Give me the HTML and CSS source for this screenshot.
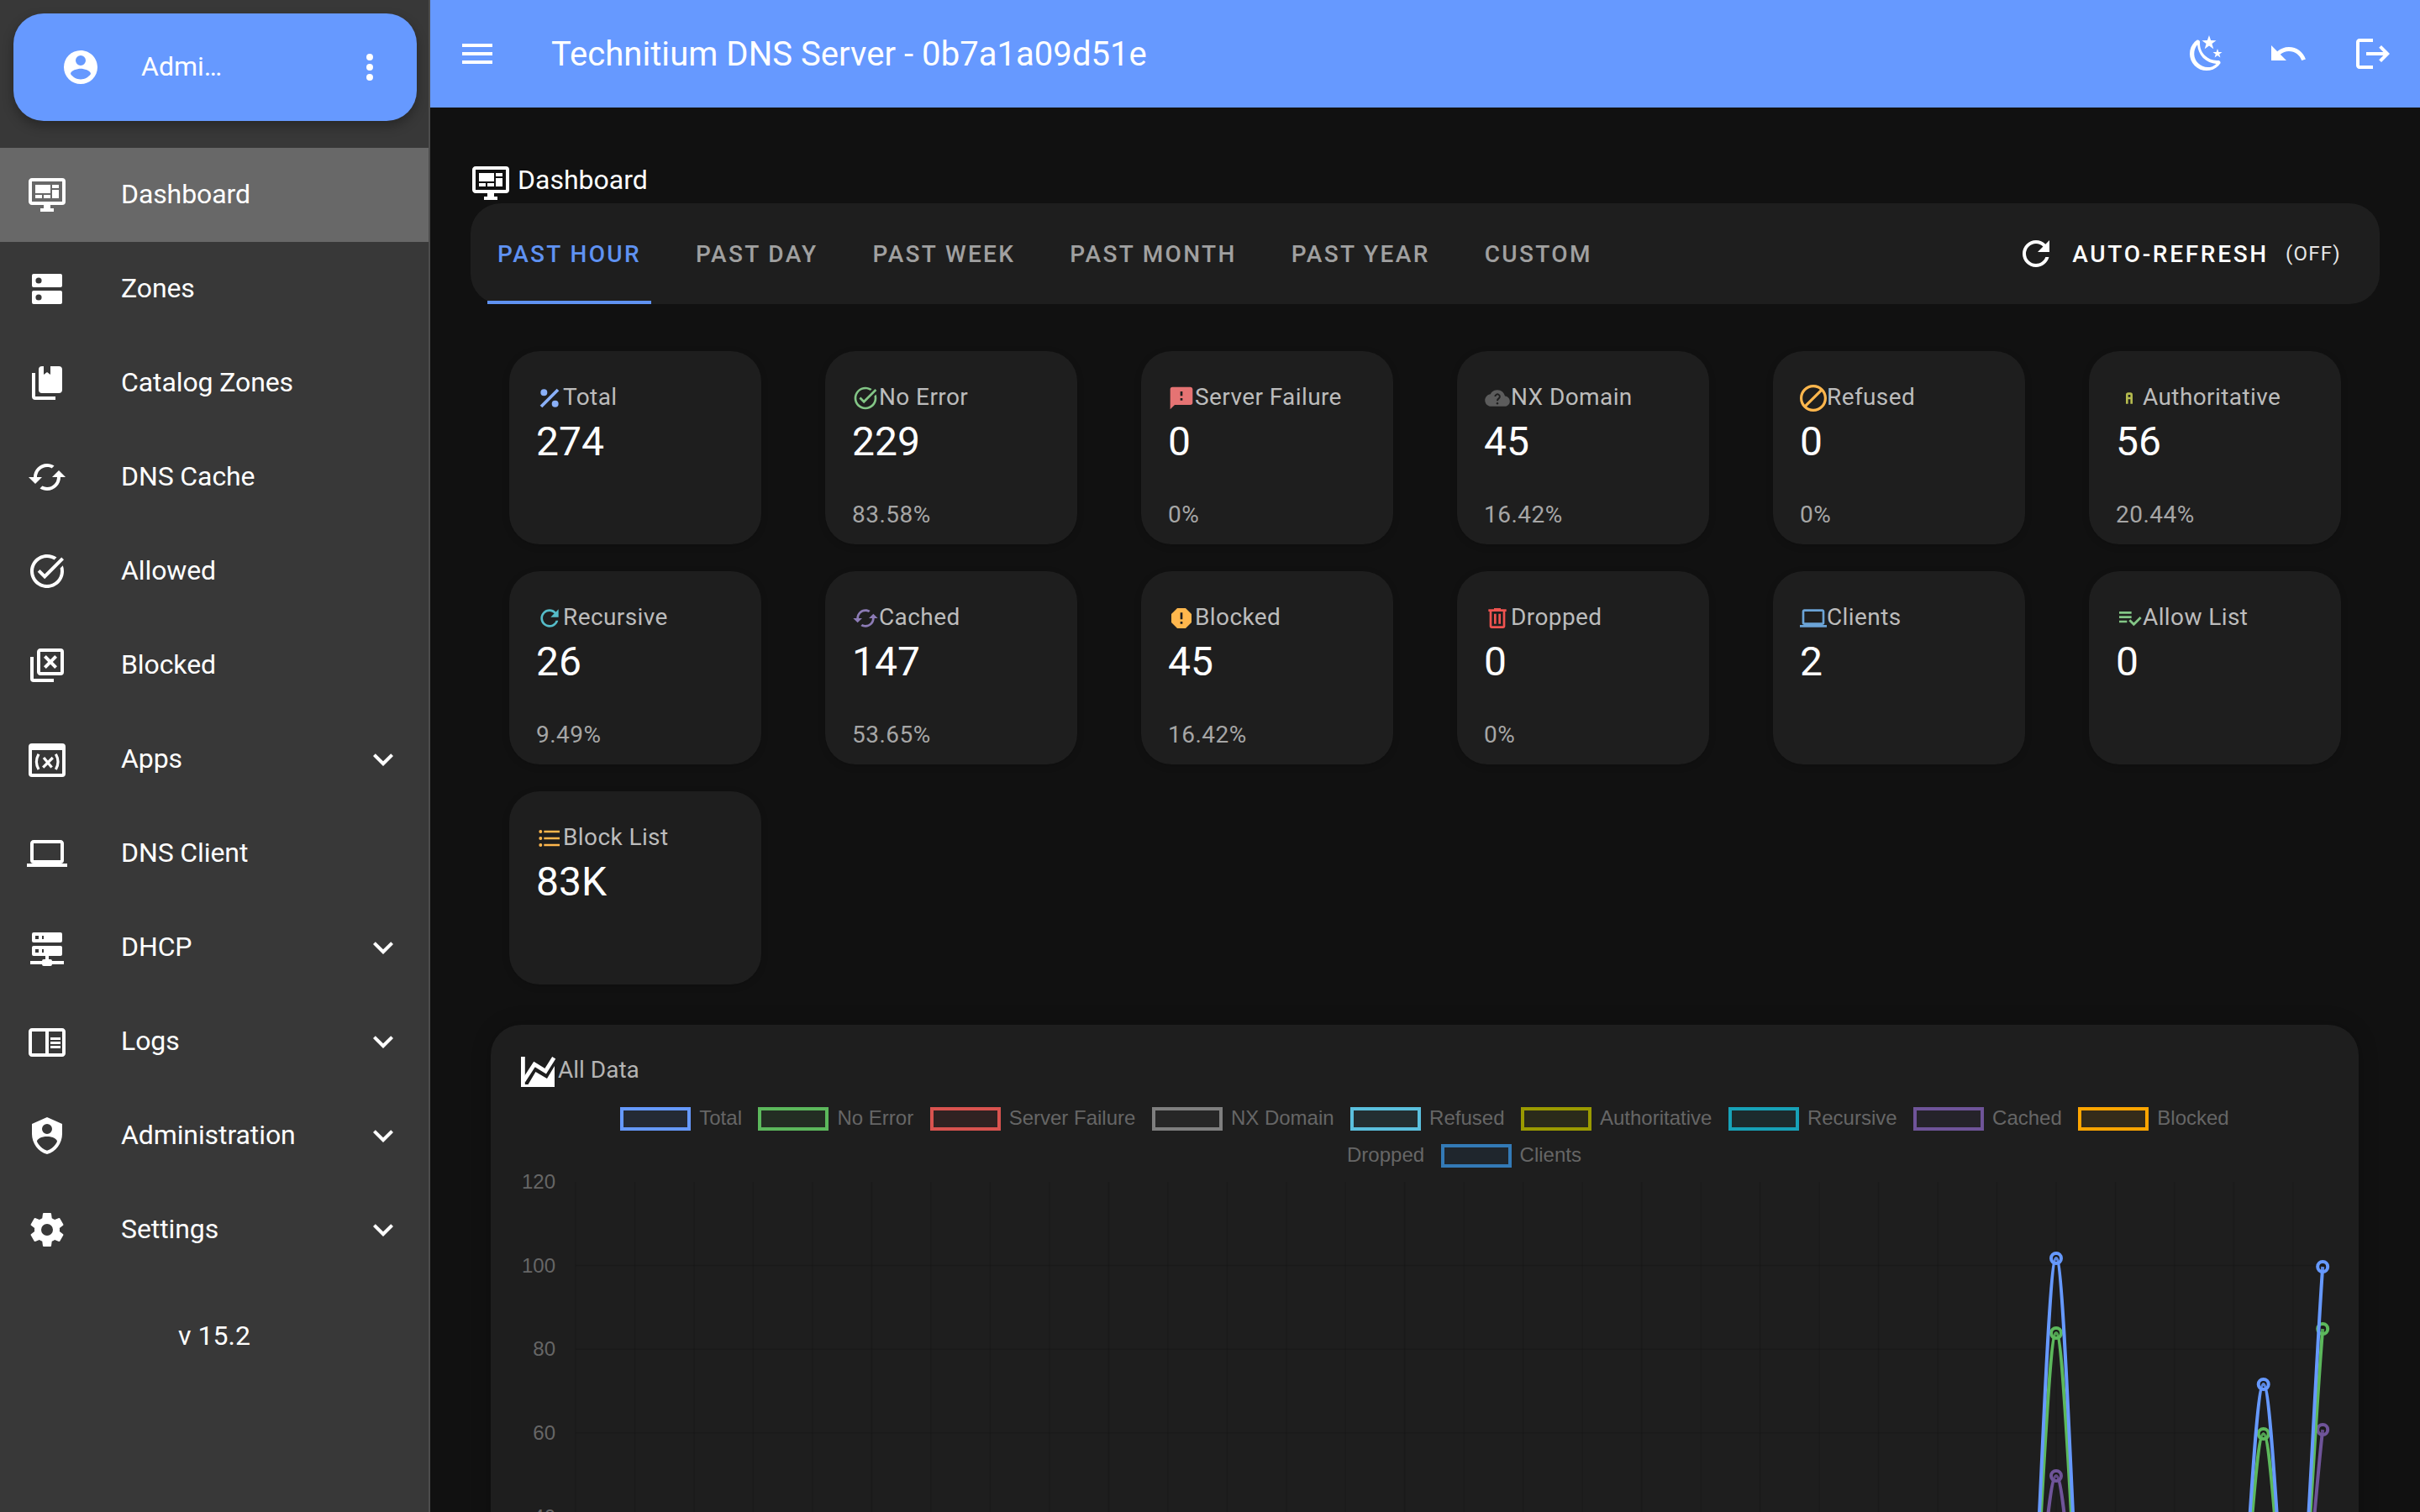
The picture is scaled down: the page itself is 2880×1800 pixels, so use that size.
FILE: index.html
```html
<!DOCTYPE html>
<html>
	<head>
		<meta charset="utf-8">
		<title>Technitium DNS Server</title>
		<link rel="stylesheet" href="styles.css">
	</head>
	<body>
		<!-- icon sheet -->
		<svg class="icon-sheet" xmlns="http://www.w3.org/2000/svg">
			<symbol id="i-account" viewBox="0 0 24 24"><path d="M12,19.2C9.5,19.2 7.29,17.92 6,16C6.03,14 10,12.9 12,12.9C14,12.9 17.97,14 18,16C16.71,17.92 14.5,19.2 12,19.2M12,5A3,3 0 0,1 15,8A3,3 0 0,1 12,11A3,3 0 0,1 9,8A3,3 0 0,1 12,5M12,2A10,10 0 0,0 2,12A10,10 0 0,0 12,22A10,10 0 0,0 22,12C22,6.47 17.5,2 12,2Z"/></symbol>
			<symbol id="i-dots" viewBox="0 0 24 24"><path d="M12,16A2,2 0 0,1 14,18A2,2 0 0,1 12,20A2,2 0 0,1 10,18A2,2 0 0,1 12,16M12,10A2,2 0 0,1 14,12A2,2 0 0,1 12,14A2,2 0 0,1 10,12A2,2 0 0,1 12,10M12,4A2,2 0 0,1 14,6A2,2 0 0,1 12,8A2,2 0 0,1 10,6A2,2 0 0,1 12,4Z"/></symbol>
			<symbol id="i-monitor" viewBox="0 0 24 24"><path d="M21,16V4H3V16H21M21,2A2,2 0 0,1 23,4V16A2,2 0 0,1 21,18H14V20H16V22H8V20H10V18H3C1.89,18 1,17.1 1,16V4C1,2.89 1.89,2 3,2H21M5,6H14V11H5V6M15,6H19V8H15V6M19,9V14H15V9H19M5,12H9V14H5V12M10,12H14V14H10V12Z"/></symbol>
			<symbol id="i-dns" viewBox="0 0 24 24"><path fill-rule="evenodd" d="M4,3H20A1,1 0 0,1 21,4V10A1,1 0 0,1 20,11H4A1,1 0 0,1 3,10V4A1,1 0 0,1 4,3M7,5.2A1.8,1.8 0 1,0 7,8.8A1.8,1.8 0 1,0 7,5.2M4,13H20A1,1 0 0,1 21,14V20A1,1 0 0,1 20,21H4A1,1 0 0,1 3,20V14A1,1 0 0,1 4,13M7,15.2A1.8,1.8 0 1,0 7,18.8A1.8,1.8 0 1,0 7,15.2Z"/></symbol>
			<symbol id="i-book" viewBox="0 0 24 24"><path d="M19 18H9A2 2 0 0 1 7 16V4A2 2 0 0 1 9 2H10V7L12 5.5L14 7V2H19A2 2 0 0 1 21 4V16A2 2 0 0 1 19 18M17 20H5V6H3V20A2 2 0 0 0 5 22H17V20Z"/></symbol>
			<symbol id="i-cached" viewBox="0 0 24 24"><path d="M19,8L15,12H18A6,6 0 0,1 12,18C11,18 10.03,17.75 9.2,17.3L7.74,18.76C8.97,19.54 10.43,20 12,20A8,8 0 0,0 20,12H23M6,12A6,6 0 0,1 12,6C13,6 13.97,6.25 14.8,6.7L16.26,5.24C15.03,4.46 13.57,4 12,4A8,8 0 0,0 4,12H1L5,16L9,12"/></symbol>
			<symbol id="i-task" viewBox="0 0 24 24"><path d="M22 5.18L10.59 16.6l-4.24-4.24 1.41-1.41 2.83 2.83 10-10L22 5.18zm-2.21 5.04c.13.57.21 1.17.21 1.78 0 4.42-3.58 8-8 8s-8-3.58-8-8 3.58-8 8-8c1.58 0 3.04.46 4.28 1.25l1.44-1.44C16.1 2.67 14.13 2 12 2 6.48 2 2 6.48 2 12s4.48 10 10 10 10-4.48 10-10c0-1.19-.22-2.33-.6-3.39l-1.61 1.61z"/></symbol>
			<symbol id="i-close-box" viewBox="0 0 24 24"><path fill-rule="evenodd" d="M20,16V4H8V16H20M22,16A2,2 0 0,1 20,18H8C6.89,18 6,17.1 6,16V4C6,2.89 6.89,2 8,2H20A2,2 0 0,1 22,4V16M14,8.59L16.59,6L18,7.41L15.41,10L18,12.59L16.59,14L14,11.41L11.41,14L10,12.59L12.59,10L10,7.41L11.41,6Z"/><path d="M16,20V22H4A2,2 0 0,1 2,20V7H4V20H16Z"/></symbol>
			<symbol id="i-apps" viewBox="0 0 24 24"><path fill-rule="evenodd" d="M3,2.5H21A2,2 0 0,1 23,4.5V20.5A2,2 0 0,1 21,22.5H3A2,2 0 0,1 1,20.5V4.5A2,2 0 0,1 3,2.5M3,6.5V20.5H21V6.5Z"/><path fill="none" stroke="currentColor" stroke-width="1.6" d="M7,8.9Q4.4,13.5 7,18M17.2,8.9Q19.8,13.5 17.2,18M10,11L14.8,16.8M15.4,11L9.6,16.8"/></symbol>
			<symbol id="i-laptop" viewBox="0 0 24 24"><path d="M4,6H20V16H4M20,18A2,2 0 0,0 22,16V6C22,4.89 21.1,4 20,4H4C2.89,4 2,4.89 2,6V16A2,2 0 0,0 4,18H0V20H24V18H20Z"/></symbol>
			<symbol id="i-server" viewBox="0 0 24 24"><path d="M13,19H14A1,1 0 0,1 15,20H22V22H15A1,1 0 0,1 14,23H10A1,1 0 0,1 9,22H2V20H9A1,1 0 0,1 10,19H11V17H4A1,1 0 0,1 3,16V12A1,1 0 0,1 4,11H20A1,1 0 0,1 21,12V16A1,1 0 0,1 20,17H13V19M4,3H20A1,1 0 0,1 21,4V8A1,1 0 0,1 20,9H4A1,1 0 0,1 3,8V4A1,1 0 0,1 4,3M9,7H10V5H9V7M9,15H10V13H9V15M5,5V7H7V5H5M5,13V15H7V13H5Z"/></symbol>
			<symbol id="i-reader" viewBox="0 0 24 24"><path d="M21 4H3c-1.1 0-2 .9-2 2v13c0 1.1.9 2 2 2h18c1.1 0 2-.9 2-2V6c0-1.1-.9-2-2-2zM3 19V6h8v13H3zm18 0h-8V6h8v13zm-7-9.5h6V11h-6zm0 2.5h6v1.5h-6zm0 2.5h6V16h-6z"/></symbol>
			<symbol id="i-shield" viewBox="0 0 24 24"><path d="M12,1L3,5V11C3,16.55 6.84,21.74 12,23C17.16,21.74 21,16.55 21,11V5L12,1M12,5A3,3 0 0,1 15,8A3,3 0 0,1 12,11A3,3 0 0,1 9,8A3,3 0 0,1 12,5M17.13,17C15.92,18.85 14.11,20.24 12,20.92C9.89,20.24 8.08,18.85 6.87,17C6.53,16.5 6.24,16 6,15.47C6,13.82 8.71,12.47 12,12.47C15.29,12.47 18,13.79 18,15.47C17.76,16 17.47,16.5 17.13,17Z"/></symbol>
			<symbol id="i-cog" viewBox="0 0 24 24"><path d="M12,15.5A3.5,3.5 0 0,1 8.5,12A3.5,3.5 0 0,1 12,8.5A3.5,3.5 0 0,1 15.5,12A3.5,3.5 0 0,1 12,15.5M19.43,12.97C19.47,12.65 19.5,12.33 19.5,12C19.5,11.67 19.47,11.34 19.43,11L21.54,9.37C21.73,9.22 21.78,8.95 21.66,8.73L19.66,5.27C19.54,5.05 19.27,4.96 19.05,5.05L16.56,6.05C16.04,5.66 15.5,5.32 14.87,5.07L14.5,2.42C14.46,2.18 14.25,2 14,2H10C9.75,2 9.54,2.18 9.5,2.42L9.13,5.07C8.5,5.32 7.96,5.66 7.44,6.05L4.95,5.05C4.73,4.96 4.46,5.05 4.34,5.27L2.34,8.73C2.21,8.95 2.27,9.22 2.46,9.37L4.57,11C4.53,11.34 4.5,11.67 4.5,12C4.5,12.33 4.53,12.65 4.57,12.97L2.46,14.63C2.27,14.78 2.21,15.05 2.34,15.27L4.34,18.73C4.46,18.95 4.73,19.03 4.95,18.95L7.44,17.94C7.96,18.34 8.5,18.68 9.13,18.93L9.5,21.58C9.54,21.82 9.75,22 10,22H14C14.25,22 14.46,21.82 14.5,21.58L14.87,18.93C15.5,18.67 16.04,18.34 16.56,17.94L19.05,18.95C19.27,19.03 19.54,18.95 19.66,18.73L21.66,15.27C21.78,15.05 21.73,14.78 21.54,14.63L19.43,12.97Z"/></symbol>
			<symbol id="i-chevron" viewBox="0 0 24 24"><path d="M16.59 8.59L12 13.17 7.41 8.59 6 10l6 6 6-6z"/></symbol>
			<symbol id="i-menu" viewBox="0 0 24 24"><path d="M3,6H21V8H3V6M3,11H21V13H3V11M3,16H21V18H3V16Z"/></symbol>
			<symbol id="i-moon" viewBox="0 0 24 24"><path d="M17.75,4.09L15.22,6.03L16.13,9.09L13.5,7.28L10.87,9.09L11.78,6.03L9.25,4.09L12.44,4L13.5,1L14.56,4L17.75,4.09M21.25,11L19.61,12.25L20.2,14.23L18.5,13.06L16.8,14.23L17.39,12.25L15.75,11L17.81,10.95L18.5,9L19.19,10.95L21.25,11M18.97,15.95C19.8,15.87 20.69,17.05 20.16,17.8C19.84,18.25 19.5,18.67 19.08,19.07C15.17,23 8.84,23 4.94,19.07C1.03,15.17 1.03,8.83 4.94,4.93C5.34,4.53 5.76,4.17 6.21,3.85C6.96,3.32 8.14,4.21 8.06,5.04C7.79,7.9 8.75,10.87 10.95,13.06C13.14,15.26 16.1,16.22 18.97,15.95M17.82,17.94C14.98,17.79 12.16,16.61 9.93,14.5C7.9,12.27 6.72,9.45 6.56,6.61C3.84,9.83 3.99,14.65 7.02,17.68C10.05,20.71 14.87,20.87 17.82,17.94Z"/></symbol>
			<symbol id="i-undo" viewBox="0 0 24 24"><path d="M12.5,8C9.85,8 7.45,9 5.6,10.6L2,7V16H11L7.38,12.38C8.77,11.22 10.54,10.5 12.5,10.5C16.04,10.5 19.05,12.81 20.1,16L22.47,15.22C21.08,11.03 17.15,8 12.5,8Z"/></symbol>
			<symbol id="i-logout" viewBox="0 0 24 24"><path d="M17 7l-1.41 1.41L18.17 11H8v2h10.17l-2.58 2.58L17 17l5-5zM4 5h8V3H4c-1.1 0-2 .9-2 2v14c0 1.1.9 2 2 2h8v-2H4V5z"/></symbol>
			<symbol id="i-refresh" viewBox="0 0 24 24"><path d="M17.65,6.35C16.2,4.9 14.21,4 12,4A8,8 0 0,0 4,12A8,8 0 0,0 12,20C15.73,20 18.84,17.45 19.73,14H17.65C16.83,16.33 14.61,18 12,18A6,6 0 0,1 6,12A6,6 0 0,1 12,6C13.66,6 15.14,6.69 16.22,7.78L13,11H20V4L17.65,6.35Z"/></symbol>
			<symbol id="i-percent" viewBox="0 0 24 24"><path d="M18.5,3.5L20.5,5.5L5.5,20.5L3.5,18.5L18.5,3.5M7,4A3,3 0 0,1 10,7A3,3 0 0,1 7,10A3,3 0 0,1 4,7A3,3 0 0,1 7,4M17,14A3,3 0 0,1 20,17A3,3 0 0,1 17,20A3,3 0 0,1 14,17A3,3 0 0,1 17,14Z"/></symbol>
			<symbol id="i-message" viewBox="0 0 24 24"><path d="M13,10H11V6H13M13,14H11V12H13M20,2H4A2,2 0 0,0 2,4V22L6,18H20A2,2 0 0,0 22,16V4C22,2.89 21.1,2 20,2Z"/></symbol>
			<symbol id="i-cloud" viewBox="-1 -1 26 26"><path d="M19.35 10.04C18.67 6.59 15.64 4 12 4 9.11 4 6.6 5.64 5.35 8.04 2.34 8.36 0 10.91 0 14c0 3.31 2.69 6 6 6h13c2.76 0 5-2.24 5-5 0-2.64-2.05-4.78-4.65-4.96z"/><path fill="none" stroke="#1e1e1e" stroke-width="1.6" d="M9.9,10.4A2.2,2.2 0 1,1 13.3,12.3C12.4,12.9 12,13.3 12,14.6"/><circle cx="12" cy="17" r="1" fill="#1e1e1e"/></symbol>
			<symbol id="i-cancel" viewBox="2 2 20 20"><path d="M12 2C6.48 2 2 6.48 2 12s4.48 10 10 10 10-4.48 10-10S17.52 2 12 2zM4 12c0-4.42 3.58-8 8-8 1.85 0 3.55.63 4.9 1.69L5.69 16.9C4.63 15.55 4 13.85 4 12zm8 8c-1.85 0-3.55-.63-4.9-1.69L18.31 7.1C19.37 8.45 20 10.15 20 12c0 4.42-3.58 8-8 8z"/></symbol>
			<symbol id="i-alpha" viewBox="0 0 24 24"><path d="M11,7A2,2 0 0,0 9,9V17H11V13H13V17H15V9A2,2 0 0,0 13,7H11M11,9H13V11H11V9Z"/></symbol>
			<symbol id="i-octagon" viewBox="0 0 24 24"><path d="M13 13H11V7H13M11 15H13V17H11M15.73 3H8.27L3 8.27V15.73L8.27 21H15.73L21 15.73V8.27L15.73 3Z"/></symbol>
			<symbol id="i-trash" viewBox="0 0 24 24"><path d="M9,3V4H4V6H5V19A2,2 0 0,0 7,21H17A2,2 0 0,0 19,19V6H20V4H15V3H9M7,6H17V19H7V6M9,8V17H11V8H9M13,8V17H15V8H13Z"/></symbol>
			<symbol id="i-allow" viewBox="0 0 24 24"><path d="M14 10H3V12H14V10M14 6H3V8H14V6M3 16H10V14H3V16M21.5 10.5L23 12L16 19L11.5 14.5L13 13L16 16L21.5 10.5Z"/></symbol>
			<symbol id="i-bullets" viewBox="0 0 24 24"><path d="M7,5H21V7H7V5M7,13V11H21V13H7M4,4.5A1.5,1.5 0 0,1 5.5,6A1.5,1.5 0 0,1 4,7.5A1.5,1.5 0 0,1 2.5,6A1.5,1.5 0 0,1 4,4.5M4,10.5A1.5,1.5 0 0,1 5.5,12A1.5,1.5 0 0,1 4,13.5A1.5,1.5 0 0,1 2.5,12A1.5,1.5 0 0,1 4,10.5M7,19V17H21V19H7M4,16.5A1.5,1.5 0 0,1 5.5,18A1.5,1.5 0 0,1 4,19.5A1.5,1.5 0 0,1 2.5,18A1.5,1.5 0 0,1 4,16.5Z"/></symbol>
			<symbol id="i-area" viewBox="0 0 24 24"><path d="M2,3H4.4V21H2ZM2,21V19.5H22V21ZM5.4,21L10.7,12L17.5,16L22,8.5V21Z"/><path fill="none" stroke="currentColor" stroke-width="2.4" d="M3.6,17.4L10,7.5L16.6,11.6L21.6,3.6"/></symbol>
		</svg>

		<div class="app">
			<aside class="sidebar">
				<div class="user-card">
					<svg class="ico"><use href="#i-account"/></svg>
					<span class="user-name">Admi…</span>
					<svg class="ico user-menu"><use href="#i-dots"/></svg>
				</div>
				<nav class="nav">
					<a class="nav-item active"><svg class="ico"><use href="#i-monitor"/></svg><span>Dashboard</span></a>
					<a class="nav-item"><svg class="ico"><use href="#i-dns"/></svg><span>Zones</span></a>
					<a class="nav-item"><svg class="ico"><use href="#i-book"/></svg><span>Catalog Zones</span></a>
					<a class="nav-item"><svg class="ico"><use href="#i-cached"/></svg><span>DNS Cache</span></a>
					<a class="nav-item"><svg class="ico"><use href="#i-task"/></svg><span>Allowed</span></a>
					<a class="nav-item"><svg class="ico"><use href="#i-close-box"/></svg><span>Blocked</span></a>
					<a class="nav-item"><svg class="ico"><use href="#i-apps"/></svg><span>Apps</span><svg class="ico chevron"><use href="#i-chevron"/></svg></a>
					<a class="nav-item"><svg class="ico"><use href="#i-laptop"/></svg><span>DNS Client</span></a>
					<a class="nav-item"><svg class="ico"><use href="#i-server"/></svg><span>DHCP</span><svg class="ico chevron"><use href="#i-chevron"/></svg></a>
					<a class="nav-item"><svg class="ico"><use href="#i-reader"/></svg><span>Logs</span><svg class="ico chevron"><use href="#i-chevron"/></svg></a>
					<a class="nav-item"><svg class="ico"><use href="#i-shield"/></svg><span>Administration</span><svg class="ico chevron"><use href="#i-chevron"/></svg></a>
					<a class="nav-item"><svg class="ico"><use href="#i-cog"/></svg><span>Settings</span><svg class="ico chevron"><use href="#i-chevron"/></svg></a>
				</nav>
				<div class="version">v 15.2</div>
			</aside>

			<div class="main">
				<header class="topbar">
					<svg class="ico"><use href="#i-menu"/></svg>
					<div class="topbar-title">Technitium DNS Server - 0b7a1a09d51e</div>
					<svg class="ico theme-btn"><use href="#i-moon"/></svg>
					<svg class="ico undo-btn"><use href="#i-undo"/></svg>
					<svg class="ico logout-btn"><use href="#i-logout"/></svg>
				</header>

				<main class="content">
					<div class="page-title">
						<svg class="ico"><use href="#i-monitor"/></svg>
						<span>Dashboard</span>
					</div>

					<div class="tabs">
						<a class="tab active">Past Hour</a>
						<a class="tab">Past Day</a>
						<a class="tab">Past Week</a>
						<a class="tab">Past Month</a>
						<a class="tab">Past Year</a>
						<a class="tab">Custom</a>
						<div class="auto-refresh">
							<svg class="ico"><use href="#i-refresh"/></svg>
							<span class="auto-label">Auto-Refresh</span>
							<span class="auto-state">(OFF)</span>
						</div>
					</div>

					<div class="stats">
						<div class="stat">
							<div class="stat-title"><svg class="ico-sm c-blue"><use href="#i-percent"/></svg>Total</div>
							<div class="stat-value">274</div>
						</div>
						<div class="stat">
							<div class="stat-title"><svg class="ico-sm c-green"><use href="#i-task"/></svg>No Error</div>
							<div class="stat-value">229</div>
							<div class="stat-pct">83.58%</div>
						</div>
						<div class="stat">
							<div class="stat-title"><svg class="ico-sm c-red"><use href="#i-message"/></svg>Server Failure</div>
							<div class="stat-value">0</div>
							<div class="stat-pct">0%</div>
						</div>
						<div class="stat">
							<div class="stat-title"><svg class="ico-sm c-gray"><use href="#i-cloud"/></svg>NX Domain</div>
							<div class="stat-value">45</div>
							<div class="stat-pct">16.42%</div>
						</div>
						<div class="stat">
							<div class="stat-title"><svg class="ico-sm c-amber"><use href="#i-cancel"/></svg>Refused</div>
							<div class="stat-value">0</div>
							<div class="stat-pct">0%</div>
						</div>
						<div class="stat">
							<div class="stat-title"><svg class="ico-sm c-olive"><use href="#i-alpha"/></svg>Authoritative</div>
							<div class="stat-value">56</div>
							<div class="stat-pct">20.44%</div>
						</div>
						<div class="stat">
							<div class="stat-title"><svg class="ico-sm c-teal"><use href="#i-refresh"/></svg>Recursive</div>
							<div class="stat-value">26</div>
							<div class="stat-pct">9.49%</div>
						</div>
						<div class="stat">
							<div class="stat-title"><svg class="ico-sm c-purple"><use href="#i-cached"/></svg>Cached</div>
							<div class="stat-value">147</div>
							<div class="stat-pct">53.65%</div>
						</div>
						<div class="stat">
							<div class="stat-title"><svg class="ico-sm c-amber"><use href="#i-octagon"/></svg>Blocked</div>
							<div class="stat-value">45</div>
							<div class="stat-pct">16.42%</div>
						</div>
						<div class="stat">
							<div class="stat-title"><svg class="ico-sm c-crimson"><use href="#i-trash"/></svg>Dropped</div>
							<div class="stat-value">0</div>
							<div class="stat-pct">0%</div>
						</div>
						<div class="stat">
							<div class="stat-title"><svg class="ico-sm c-sky"><use href="#i-laptop"/></svg>Clients</div>
							<div class="stat-value">2</div>
						</div>
						<div class="stat">
							<div class="stat-title"><svg class="ico-sm c-green"><use href="#i-allow"/></svg>Allow List</div>
							<div class="stat-value">0</div>
						</div>
						<div class="stat">
							<div class="stat-title"><svg class="ico-sm c-amber"><use href="#i-bullets"/></svg>Block List</div>
							<div class="stat-value">83K</div>
						</div>
					</div>

					<section class="chart-card">
						<div class="chart-title">
							<svg class="ico"><use href="#i-area"/></svg>
							<span>All Data</span>
						</div>
						<div class="legend">
							<div class="legend-item"><i class="swatch s-total"></i>Total</div>
							<div class="legend-item"><i class="swatch s-noerror"></i>No Error</div>
							<div class="legend-item"><i class="swatch s-failure"></i>Server Failure</div>
							<div class="legend-item"><i class="swatch s-nx"></i>NX Domain</div>
							<div class="legend-item"><i class="swatch s-refused"></i>Refused</div>
							<div class="legend-item"><i class="swatch s-auth"></i>Authoritative</div>
							<div class="legend-item"><i class="swatch s-recursive"></i>Recursive</div>
							<div class="legend-item"><i class="swatch s-cached"></i>Cached</div>
							<div class="legend-item"><i class="swatch s-blocked"></i>Blocked</div>
							<div class="legend-item"><i class="swatch s-dropped"></i>Dropped</div>
							<div class="legend-item"><i class="swatch s-clients"></i>Clients</div>
						</div>
						<!-- viewBox uses screen coordinates so the grid lines up with the reference -->
						<svg class="plot" viewBox="584 1396 2223 660">
							<g class="grid">
								<path d="M685 1407V2005M755.5 1407V2005M826 1407V2005M896.4 1407V2005M966.9 1407V2005M1037.4 1407V2005M1107.9 1407V2005M1178.4 1407V2005M1248.8 1407V2005M1319.3 1407V2005M1389.8 1407V2005M1460.3 1407V2005M1530.8 1407V2005M1601.2 1407V2005M1671.7 1407V2005M1742.2 1407V2005M1812.7 1407V2005M1883.2 1407V2005M1953.6 1407V2005M2024.1 1407V2005M2094.6 1407V2005M2165.1 1407V2005M2235.6 1407V2005M2306 1407V2005M2376.5 1407V2005M2447 1407V2005M2517.5 1407V2005M2588 1407V2005M2658.4 1407V2005M2728.9 1407V2005"/>
								<path d="M685 1506.6H2764M685 1606.2H2764M685 1705.8H2764M685 1805.4H2764"/>
							</g>
							<g class="axis">
								<text x="661" y="1415">120</text>
								<text x="661" y="1515">100</text>
								<text x="661" y="1614">80</text>
								<text x="661" y="1714">60</text>
								<text x="661" y="1814">40</text>
							</g>
							<g class="series l-cached">
								<path d="M2411.7 2005C2423.5 2005 2435.2 1757 2447 1757C2458.8 1757 2470.5 2005 2482.2 2005M2729 2005C2740.7 2005 2752.5 1803 2764.2 1702"/>
								<circle cx="2447" cy="1757" r="6"/>
								<circle cx="2764.2" cy="1702" r="6"/>
							</g>
							<g class="series l-noerror">
								<path d="M2411.7 2005C2423.5 2005 2435.2 1587 2447 1587C2458.8 1587 2470.5 2005 2482.2 2005M2658.4 2005C2670.2 2005 2681.9 1707 2693.7 1707C2705.4 1707 2717.2 2005 2729 2005C2740.7 2005 2752.5 1723 2764.2 1582"/>
								<circle cx="2447" cy="1587" r="6"/>
								<circle cx="2693.7" cy="1707" r="6"/>
								<circle cx="2764.2" cy="1582" r="6"/>
							</g>
							<g class="series l-total">
								<path d="M2411.7 2005C2423.5 2005 2435.2 1498 2447 1498C2458.8 1498 2470.5 2005 2482.2 2005M2658.4 2005C2670.2 2005 2681.9 1648 2693.7 1648C2705.4 1648 2717.2 2005 2729 2005C2740.7 2005 2752.5 1674 2764.2 1508"/>
								<circle cx="2447" cy="1498" r="6"/>
								<circle cx="2693.7" cy="1648" r="6"/>
								<circle cx="2764.2" cy="1508" r="6"/>
							</g>
						</svg>
					</section>
				</main>
			</div>
		</div>
	</body>
</html>
```

FILE: styles.css
```css
html {
  box-sizing: border-box;
  font-family: 'Roboto', 'Liberation Sans', sans-serif;
}

*, *:before, *:after {
  box-sizing: inherit;
}

body {
  margin: 0;
  height: 1800px;
  overflow: hidden;
  background: #111111;
  color: #ffffff;
}

.icon-sheet {
  position: absolute;
  width: 0;
  height: 0;
}

.ico {
  width: 48px;
  height: 48px;
  flex: none;
  fill: currentColor;
}

.ico-sm {
  width: 32px;
  height: 32px;
  flex: none;
  fill: currentColor;
}

.app {
  display: flex;
  height: 1800px;
}

/* sidebar */
.sidebar {
  width: 512px;
  flex: none;
  background: #383838;
  border-right: 2px solid #4c4c4c;
  padding-top: 16px;
}

.user-card {
  display: flex;
  align-items: center;
  width: 480px;
  height: 128px;
  margin-left: 16px;
  padding-left: 56px;
  background: #6699ff;
  border-radius: 36px;
  box-shadow: 0 6px 14px rgba(0,0,0,0.3);
}

.user-name {
  margin-left: 48px;
  padding-bottom: 3px;
  font-size: 32px;
}

.user-menu {
  margin-left: auto;
  margin-right: 32px;
}

.nav {
  margin-top: 32px;
}

.nav-item {
  display: flex;
  align-items: center;
  height: 112px;
  padding-left: 32px;
  padding-right: 30px;
  font-size: 32px;
  letter-spacing: -0.1px;
}

.nav-item span {
  margin-left: 64px;
  padding-bottom: 3px;
}

.nav-item.active {
  background: #686868;
}

.chevron {
  margin-left: auto;
}

.version {
  margin-top: 46px;
  line-height: 48px;
  font-size: 32px;
  text-align: center;
}

/* top bar */
.main {
  flex: 1;
  min-width: 0;
}

.topbar {
  display: flex;
  align-items: center;
  height: 128px;
  padding-left: 32px;
  padding-right: 32px;
  background: #6699ff;
}

.topbar-title {
  margin-left: 64px;
  font-size: 40px;
  letter-spacing: 0.05px;
}

.theme-btn {
  margin-left: auto;
}

.undo-btn {
  margin-left: 49px;
}

.logout-btn {
  margin-left: 53px;
}

/* page */
.content {
  height: 1672px;
  padding: 66px 48px 0;
  overflow: hidden;
}

.page-title {
  display: flex;
  height: 48px;
}

.page-title span {
  margin-left: 8px;
  font-size: 32px;
  line-height: 40px;
}

.tabs {
  display: flex;
  align-items: stretch;
  height: 120px;
  padding-left: 20px;
  padding-right: 46px;
  background: #1e1e1e;
  border-radius: 36px;
}

.tab {
  display: flex;
  align-items: center;
  padding: 0 12px;
  margin-right: 41px;
  border-bottom: 4px solid transparent;
  border-top: 4px solid transparent;
  font-size: 28px;
  font-weight: 500;
  letter-spacing: 2.35px;
  text-transform: uppercase;
  color: #a0a0a0;
}

.tab.active {
  color: #5f92f2;
  border-bottom-color: #5f92f2;
}

.auto-refresh {
  display: flex;
  align-items: center;
  margin-left: auto;
}

.auto-label {
  margin-left: 19px;
  font-size: 28px;
  font-weight: 500;
  letter-spacing: 2.7px;
  text-transform: uppercase;
}

.auto-state {
  margin-left: 20px;
  font-size: 24px;
  letter-spacing: 1.3px;
  color: #e6e6e6;
}

/* stat cards */
.stats {
  display: grid;
  grid-template-columns: repeat(6, 1fr);
  justify-items: center;
  row-gap: 32px;
  margin: 56px 8px 0;
}

.stat {
  display: flex;
  flex-direction: column;
  width: 300px;
  height: 230px;
  padding: 41px 32px 17px;
  background: #1e1e1e;
  border-radius: 36px;
  box-shadow: 0 2px 8px rgba(0,0,0,0.15);
}

.stat-title {
  display: flex;
  height: 32px;
  font-size: 28px;
  line-height: 28px;
  letter-spacing: 0.4px;
  color: #bcbcbc;
}

.stat-title svg {
  margin-top: -1px;
}

.stat-value {
  margin-top: 7px;
  font-size: 48px;
  line-height: 56px;
}

.stat-pct {
  margin-top: auto;
  font-size: 28px;
  line-height: 36px;
  letter-spacing: 0.5px;
  color: #a6a6a6;
}

.c-blue { color: #8ab0f8; }
.c-green { color: #83c686; }
.c-red { color: #e57373; }
.c-gray { color: #5c5c5c; }
.c-amber { color: #ffb74d; }
.c-olive { color: #b4ba4e; }
.c-teal { color: #55bcc8; }
.c-purple { color: #8c7bb5; }
.c-crimson { color: #ef5350; }
.c-sky { color: #6ba3d6; }

/* chart */
.chart-card {
  height: 880px;
  margin: 48px 25px 0 24px;
  padding-top: 32px;
  background: #1e1e1e;
  border-radius: 36px;
  box-shadow: 0 0 24px rgba(0,0,0,0.2);
}

.chart-title {
  display: flex;
  align-items: center;
  height: 48px;
  padding-left: 32px;
  font-size: 28px;
}

.chart-title span {
  padding-bottom: 5px;
  color: #b4b4b4;
}

.legend {
  display: flex;
  flex-wrap: wrap;
  justify-content: center;
  gap: 16px 19.5px;
  width: 2060px;
  margin: 18px auto 0;
  font-family: 'Liberation Sans', sans-serif;
  font-size: 24px;
  line-height: 26px;
  color: #666666;
}

.legend-item {
  display: flex;
  align-items: flex-start;
  height: 28px;
}

.swatch {
  display: block;
  width: 84px;
  height: 28px;
  margin-right: 10px;
  border: 4px solid transparent;
}

.s-total { border-color: #6699ff; background: rgba(102,153,255,0.1); }
.s-noerror { border-color: #5cb85c; background: rgba(92,184,92,0.1); }
.s-failure { border-color: #d9534f; background: rgba(217,83,79,0.1); }
.s-nx { border-color: #7f7f7f; background: rgba(127,127,127,0.1); }
.s-refused { border-color: #5bc0de; background: rgba(91,192,222,0.1); }
.s-auth { border-color: #9a9a00; background: rgba(154,154,0,0.1); }
.s-recursive { border-color: #17a2b8; background: rgba(23,162,184,0.1); }
.s-cached { border-color: #6f5499; background: rgba(111,84,153,0.1); }
.s-blocked { border-color: #ffa500; background: rgba(255,165,0,0.1); }
.s-dropped { border-color: transparent; }
.s-clients { border-color: #337ab7; background: rgba(51,122,183,0.1); }

.plot {
  display: block;
  width: 2223px;
  height: 660px;
  margin-top: 6px;
}

.grid path {
  fill: none;
  stroke: rgba(0,0,0,0.1);
  stroke-width: 1.5;
}

.axis text {
  font-family: 'Liberation Sans', sans-serif;
  font-size: 24px;
  fill: #666666;
  text-anchor: end;
}

.series path,
.series circle {
  fill: none;
  stroke-width: 4;
}

.series circle {
  fill: rgba(0,0,0,0.12);
}

.l-total path, .l-total circle { stroke: #6699ff; }
.l-noerror path, .l-noerror circle { stroke: #5cb85c; }
.l-cached path, .l-cached circle { stroke: #6f5499; }
```
